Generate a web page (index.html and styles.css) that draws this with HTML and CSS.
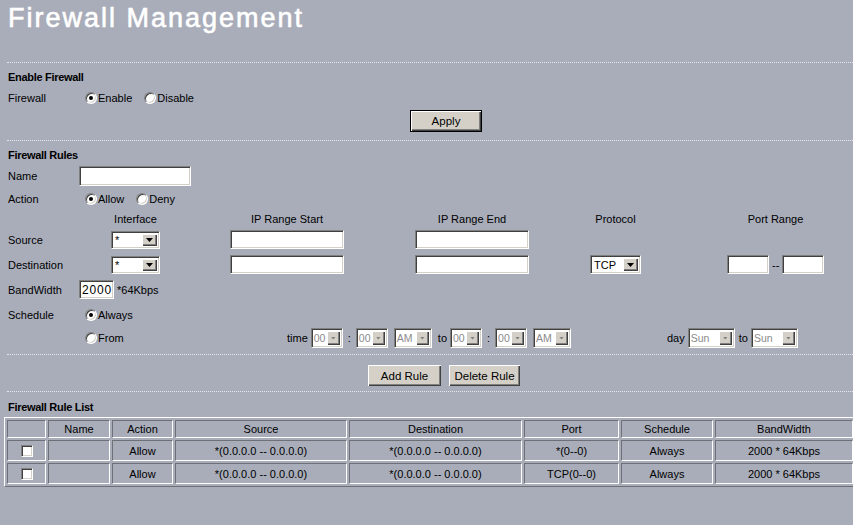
FILE: index.html
```html
<!DOCTYPE html>
<html>
<head>
<meta charset="utf-8">
<title>Firewall Management</title>
<link rel="stylesheet" href="styles.css">
</head>
<body>
<h1 class="title">Firewall Management</h1>
<div class="sep sep-top"></div>

<div class="sec-title st-1">Enable Firewall</div>
<div class="row h22">
  <span class="lbl">Firewall</span>
  <label class="opt"><span class="radio on"></span>Enable</label>
  <label class="opt"><span class="radio"></span>Disable</label>
</div>
<div class="apply-row"><button class="btn btn-default w-apply">Apply</button></div>

<div class="sep sep-2"></div>
<div class="sec-title st-1">Firewall Rules</div>
<div class="row h22">
  <span class="lbl">Name</span>
  <input class="txt w-name" type="text">
</div>
<div class="row h24">
  <span class="lbl">Action</span>
  <label class="opt"><span class="radio on"></span>Allow</label>
  <label class="opt"><span class="radio"></span>Deny</label>
</div>

<div class="grid">
  <span></span>
  <span class="gh w-if">Interface</span>
  <span class="gh w-ip">IP Range Start</span>
  <span class="gh w-ip">IP Range End</span>
  <span class="gh w-proto">Protocol</span>
  <span class="gh w-port">Port Range</span>

  <span class="glbl">Source</span>
  <span class="sel w-if h18"><span class="v">*</span><span class="a"><span class="tri"></span></span></span>
  <input class="txt w-ip h19" type="text">
  <input class="txt w-ip h19" type="text">
  <span></span>
  <span></span>

  <span class="glbl">Destination</span>
  <span class="sel w-if h18"><span class="v">*</span><span class="a"><span class="tri"></span></span></span>
  <input class="txt w-ip h19" type="text">
  <input class="txt w-ip h19" type="text">
  <span class="sel w-proto h19"><span class="v">TCP</span><span class="a"><span class="tri"></span></span></span>
  <span class="port">
    <input class="txt w-pt h19" type="text"><span class="dash">--</span><input class="txt w-pt h19" type="text">
  </span>
</div>

<div class="row h25">
  <span class="lbl">BandWidth</span>
  <input class="txt w-bw h19 bw" type="text" value="2000">
  <span class="unit">*64Kbps</span>
</div>
<div class="row h25">
  <span class="lbl">Schedule</span>
  <label class="opt"><span class="radio on"></span>Always</label>
</div>
<div class="row-from">
  <label class="opt opt-from"><span class="radio"></span>From</label>
  <div class="time-grp">
    <span>time</span>
    <span class="sel dis w-hh h20"><span class="v">00</span><span class="a"><span class="tri"></span></span></span>
    <span class="colon">:</span>
    <span class="sel dis w-hh h20"><span class="v">00</span><span class="a"><span class="tri"></span></span></span>
    <span class="sel dis w-am h20 ml3"><span class="v">AM</span><span class="a"><span class="tri"></span></span></span>
    <span class="ml3">to</span>
    <span class="sel dis w-hh h20"><span class="v">00</span><span class="a"><span class="tri"></span></span></span>
    <span class="colon">:</span>
    <span class="sel dis w-hh h20"><span class="v">00</span><span class="a"><span class="tri"></span></span></span>
    <span class="sel dis w-am h20 ml3"><span class="v">AM</span><span class="a"><span class="tri"></span></span></span>
  </div>
  <div class="day-grp">
    <span>day</span>
    <span class="sel dis w-day h20"><span class="v">Sun</span><span class="a"><span class="tri"></span></span></span>
    <span class="ml1">to</span>
    <span class="sel dis w-day h20"><span class="v">Sun</span><span class="a"><span class="tri"></span></span></span>
  </div>
</div>

<div class="sep sep-3"></div>
<div class="rule-btns">
  <button class="btn w-add">Add Rule</button>
  <button class="btn w-del">Delete Rule</button>
</div>
<div class="sep sep-4"></div>

<div class="sec-title st-2">Firewall Rule List</div>
<table class="list">
  <thead>
    <tr>
      <th class="c1"></th>
      <th class="c2">Name</th>
      <th class="c3">Action</th>
      <th class="c4">Source</th>
      <th class="c5">Destination</th>
      <th class="c6">Port</th>
      <th class="c7">Schedule</th>
      <th class="c8">BandWidth</th>
    </tr>
  </thead>
  <tbody>
    <tr>
      <td><span class="cb"></span></td>
      <td></td>
      <td>Allow</td>
      <td>*(0.0.0.0 -- 0.0.0.0)</td>
      <td>*(0.0.0.0 -- 0.0.0.0)</td>
      <td>*(0--0)</td>
      <td>Always</td>
      <td>2000 * 64Kbps</td>
    </tr>
    <tr>
      <td><span class="cb"></span></td>
      <td></td>
      <td>Allow</td>
      <td>*(0.0.0.0 -- 0.0.0.0)</td>
      <td>*(0.0.0.0 -- 0.0.0.0)</td>
      <td>TCP(0--0)</td>
      <td>Always</td>
      <td>2000 * 64Kbps</td>
    </tr>
  </tbody>
</table>
</body>
</html>
```

FILE: styles.css
```css
* { box-sizing: border-box; }

html, body {
  margin: 0;
  padding: 0;
  overflow: hidden;
}

body {
  width: 853px;
  height: 525px;
  background: #a9adba;
  font-family: "Liberation Sans", Arial, sans-serif;
  font-size: 11px;
  color: #000;
}

.title {
  margin: 0;
  height: 35px;
  padding: 1px 0 0 8px;
  font-size: 27px;
  line-height: 34px;
  font-weight: normal;
  letter-spacing: 2px;
  color: #fff;
  -webkit-text-stroke: 0.6px #fff;
}

.sep {
  height: 0;
  margin-left: 7px;
  border-top: 1px dotted #e6e6ec;
}
.sep-top { margin-top: 27px; }
.sep-2 { margin-top: 7px; }
.sep-3 { margin-top: 6px; }
.sep-4 { margin-top: 5px; }

.sec-title {
  height: 20px;
  line-height: 20px;
  padding-left: 8px;
  font-weight: bold;
  letter-spacing: -0.3px;
}
.st-1 { margin-top: 4px; }
.st-2 { margin-top: 5px; }

.row {
  display: flex;
  align-items: center;
  padding-left: 8px;
}
.h22 { height: 22px; }
.h24 { height: 24px; }
.h25 { height: 25px; }

.lbl {
  flex: none;
  width: 71px;
}

.opt {
  display: inline-flex;
  align-items: center;
  white-space: nowrap;
}
.opt + .opt { margin-left: 6px; }

.radio {
  position: relative;
  flex: none;
  width: 12px;
  height: 12px;
  margin: 0 1px 0 6px;
  border-radius: 50%;
  background: #fff;
  border: 1px solid;
  border-color: #808080 #fff #fff #808080;
  box-shadow: inset 1px 1px #404040, inset -1px -1px #d4d0c8;
}
.radio.on::after {
  content: "";
  position: absolute;
  left: 3px;
  top: 3px;
  width: 4px;
  height: 4px;
  border-radius: 50%;
  background: #000;
}

.apply-row {
  height: 24px;
  padding: 1px 0 0 410px;
}

.btn {
  display: block;
  height: 21px;
  padding: 0;
  border: none;
  background: #d4d0c8;
  font-family: "Liberation Sans", Arial, sans-serif;
  font-size: 11.5px;
  color: #000;
  box-shadow: inset 1px 1px #fff, inset -1px -1px #404040, inset -2px -2px #808080;
}
.btn-default {
  height: 22px;
  border: 1px solid #000;
}
.w-apply { width: 72px; }
.w-add { width: 73px; }
.w-del { width: 71px; }

.rule-btns {
  display: flex;
  gap: 8px;
  margin-top: 10px;
  padding-left: 368px;
  height: 21px;
}

.txt {
  display: block;
  margin: 0;
  padding: 0 2px;
  background: #fff;
  border: 1px solid;
  border-color: #808080 #fff #fff #808080;
  box-shadow: inset 1px 1px #404040, inset -1px -1px #d4d0c8;
  font-family: "Liberation Sans", Arial, sans-serif;
  font-size: 13px;
  color: #000;
  outline: none;
}
.w-name { width: 112px; height: 20px; }
.w-ip { width: 114px; }
.w-pt { width: 42px; }
.w-bw { width: 35px; }
.h18 { height: 18px; }
.h19 { height: 19px; }
.h20 { height: 20px; }
.bw {
  padding: 0 0 0 2px;
  font-size: 12px;
  letter-spacing: 0.8px;
}
.unit { margin-left: 3px; }

.grid {
  display: grid;
  grid-template-columns: 103px 119px 185px 175px 137px 97px;
  grid-template-rows: 16px 25px 25px;
  align-items: center;
  justify-items: start;
  padding-left: 8px;
}
.gh { text-align: center; white-space: nowrap; }
.w-if { width: 49px; }
.w-proto { width: 51px; }
.w-port { width: 97px; }

.port {
  display: flex;
  align-items: center;
  white-space: nowrap;
}
.dash { flex: none; margin: 0 3px; }

.sel {
  display: inline-flex;
  align-items: stretch;
  flex: none;
  padding: 2px;
  background: #fff;
  border: 1px solid;
  border-color: #808080 #fff #fff #808080;
  box-shadow: inset 1px 1px #404040, inset -1px -1px #d4d0c8;
  font-size: 11px;
  color: #000;
}
.sel .v {
  flex: 1;
  min-width: 0;
  padding-left: 1px;
  display: flex;
  align-items: center;
  white-space: nowrap;
}
.sel .a {
  flex: none;
  width: 15px;
  display: flex;
  align-items: center;
  justify-content: center;
  background: #d4d0c8;
  box-shadow: inset 1px 1px #fff, inset -1px -1px #404040, inset -2px -2px #808080;
}
.tri {
  display: block;
  width: 7px;
  height: 4px;
  margin-top: 1px;
  background: #000;
  clip-path: polygon(0 0, 100% 0, 50% 100%);
}
.sel.dis { color: #8a8a8a; font-size: 10.5px; }
.sel.dis .v { padding-left: 0; }
.sel.dis .a { width: 13px; }
.sel.dis .tri { width: 5px; height: 3px; background: #808080; }

.w-hh { width: 32px; }
.w-am { width: 38px; }
.w-day { width: 47px; }

.row-from {
  display: flex;
  align-items: center;
  height: 21px;
  padding-left: 79px;
}
.opt-from { width: 208px; flex: none; }
.time-grp {
  display: flex;
  align-items: center;
  gap: 3px;
  width: 380px;
  flex: none;
}
.day-grp {
  display: flex;
  align-items: center;
  gap: 3px;
}
.colon { padding: 0 2px; }
.ml3 { margin-left: 3px; }
.ml1 { margin-left: 1px; }

.list {
  margin-left: 4px;
  width: 852px;
  table-layout: fixed;
  border-collapse: separate;
  border-spacing: 2px;
  border: 1px solid;
  border-color: #fff #6e7078 #6e7078 #fff;
}
.list th,
.list td {
  padding: 0;
  border: 1px solid;
  border-color: #6e7078 #fff #fff #6e7078;
  text-align: center;
  font-weight: normal;
  font-size: 11px;
  white-space: nowrap;
}
.list th { height: 18px; }
.list td { height: 21px; }
.c1 { width: 39px; }
.c2 { width: 62px; }
.c3 { width: 61px; }
.c4 { width: 172px; }
.c5 { width: 173px; }
.c6 { width: 95px; }
.c7 { width: 92px; }

.cb {
  display: inline-block;
  vertical-align: middle;
  width: 12px;
  height: 12px;
  background: #fff;
  border: 1px solid;
  border-color: #808080 #fff #fff #808080;
  box-shadow: inset 1px 1px #404040, inset -1px -1px #d4d0c8;
}
```
